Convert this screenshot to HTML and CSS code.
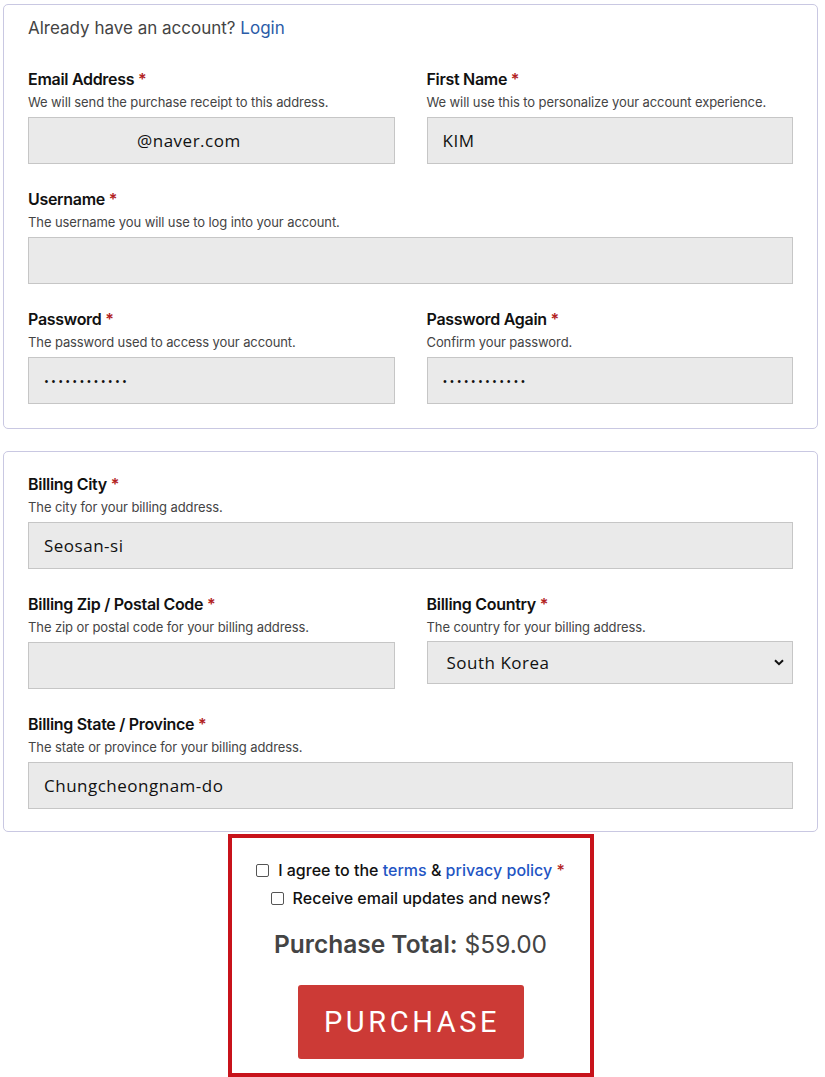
FILE: index.html
```html
<!DOCTYPE html>
<html lang="en">
<head>
<meta charset="utf-8">
<title>Checkout</title>
<link rel="stylesheet" href="styles.css">
</head>
<body>
<div class="page">
  <section class="card card-account">
    <p class="login-line">Already have an account? <a href="#" class="link">Login</a></p>
    <div class="grid">
      <div class="field">
        <label class="label">Email Address <span class="req">*</span></label>
        <p class="desc">We will send the purchase receipt to this address.</p>
        <input class="input input-email" type="text" value="@naver.com">
      </div>
      <div class="field">
        <label class="label">First Name <span class="req">*</span></label>
        <p class="desc">We will use this to personalize your account experience.</p>
        <input class="input" type="text" value="KIM">
      </div>
      <div class="field full">
        <label class="label">Username <span class="req">*</span></label>
        <p class="desc">The username you will use to log into your account.</p>
        <input class="input" type="text" value="">
      </div>
      <div class="field">
        <label class="label">Password <span class="req">*</span></label>
        <p class="desc">The password used to access your account.</p>
        <input class="input input-pass" type="password" value="abcdefghijkl">
      </div>
      <div class="field">
        <label class="label">Password Again <span class="req">*</span></label>
        <p class="desc">Confirm your password.</p>
        <input class="input input-pass" type="password" value="abcdefghijkl">
      </div>
    </div>
  </section>

  <section class="card card-billing">
    <div class="grid">
      <div class="field full">
        <label class="label">Billing City <span class="req">*</span></label>
        <p class="desc">The city for your billing address.</p>
        <input class="input" type="text" value="Seosan-si">
      </div>
      <div class="field">
        <label class="label">Billing Zip / Postal Code <span class="req">*</span></label>
        <p class="desc">The zip or postal code for your billing address.</p>
        <input class="input" type="text" value="">
      </div>
      <div class="field">
        <label class="label">Billing Country <span class="req">*</span></label>
        <p class="desc">The country for your billing address.</p>
        <div class="select">
          <span class="select-value">South Korea</span>
          <svg class="chev" width="10" height="7" viewBox="0 0 10 7"><path d="M1 1.2 5 5.2 9 1.2" fill="none" stroke="#111" stroke-width="2"/></svg>
        </div>
      </div>
      <div class="field full">
        <label class="label">Billing State / Province <span class="req">*</span></label>
        <p class="desc">The state or province for your billing address.</p>
        <input class="input" type="text" value="Chungcheongnam-do">
      </div>
    </div>
  </section>

  <section class="purchase">
    <div class="check-row"><span class="box"></span><span>I agree to the <a href="#" class="link-strong">terms</a> &amp; <a href="#" class="link-strong">privacy policy</a> <span class="req">*</span></span></div>
    <div class="check-row"><span class="box"></span><span>Receive email updates and news?</span></div>
    <p class="total"><strong>Purchase Total:</strong> $59.00</p>
    <button class="btn" type="button">PURCHASE</button>
  </section>
</div>
</body>
</html>
```

FILE: styles.css
```css
* { box-sizing: border-box; }
html, body { margin: 0; padding: 0; background: #fff; }
body { font-family: Inter, "Noto Sans", sans-serif; color: #111; }
p { margin: 0; }

.page { width: 825px; padding: 4px 7px 0 3px; }

.card {
  border: 1px solid #c9c8e2;
  border-radius: 5px;
  padding: 0 24px 24px 24px;
}
.card-account { padding-top: 12px; }
.card-billing { margin-top: 22px; padding-top: 21px; padding-bottom: 22px; }

.login-line { font-size: 17px; line-height: 22px; color: #444; margin-bottom: 29px; }
.link { color: #2b5ca8; text-decoration: none; }

.grid { display: grid; grid-template-columns: 1fr 1fr; column-gap: 32px; row-gap: 24px; }
.full { grid-column: 1 / -1; }
.field { display: flex; flex-direction: column; }

.label { font-size: 16px; font-weight: 600; line-height: 22px; color: #111; letter-spacing: -0.3px; }
.req { color: #b22222; }
.desc { font-size: 13px; line-height: 18px; color: #444; margin-top: 3px; letter-spacing: -0.1px; }

.input {
  margin-top: 6px;
  height: 47px;
  border: 1px solid #c6c6c6;
  background: #eaeaea;
  padding: 0 15px;
  font-family: "Open Sans", sans-serif;
  font-size: 17px;
  letter-spacing: 0.5px;
  color: #111;
  border-radius: 0;
  outline: none;
}
.input-email { padding-left: 108px; }
.input-pass { font-size: 13px; letter-spacing: 2.2px; }

.select {
  margin-top: 5px;
  height: 43px;
  border: 1px solid #c6c6c6;
  background: #eaeaea;
  padding: 0 8px 0 19px;
  display: flex;
  align-items: center;
  justify-content: space-between;
  font-family: "Open Sans", sans-serif;
  font-size: 17px;
  letter-spacing: 0.5px;
}

.purchase {
  width: 366px;
  margin: 2px auto 0;
  border: 4px solid #c8131b;
  padding: 18px 0 14px;
  display: flex;
  flex-direction: column;
  align-items: center;
}
.check-row { display: flex; align-items: center; gap: 9px; font-size: 16px; font-weight: 500; line-height: 28px; color: #111; }
.box { width: 13px; height: 13px; border: 1px solid #555; border-radius: 2px; background: #fff; }
.link-strong { color: #1f55c4; text-decoration: none; }

.total { margin-top: 17px; font-size: 24.5px; line-height: 30px; color: #444; }
.total strong { font-weight: 600; }

.btn {
  margin-top: 26px;
  width: 226px;
  height: 74px;
  border: 0;
  border-radius: 3px;
  background: #cc3a36;
  color: #fff;
  font-family: Roboto, sans-serif;
  font-size: 29px;
  letter-spacing: 3.6px;
  font-weight: 400;
  padding: 0 0 0 3px;
}
```
